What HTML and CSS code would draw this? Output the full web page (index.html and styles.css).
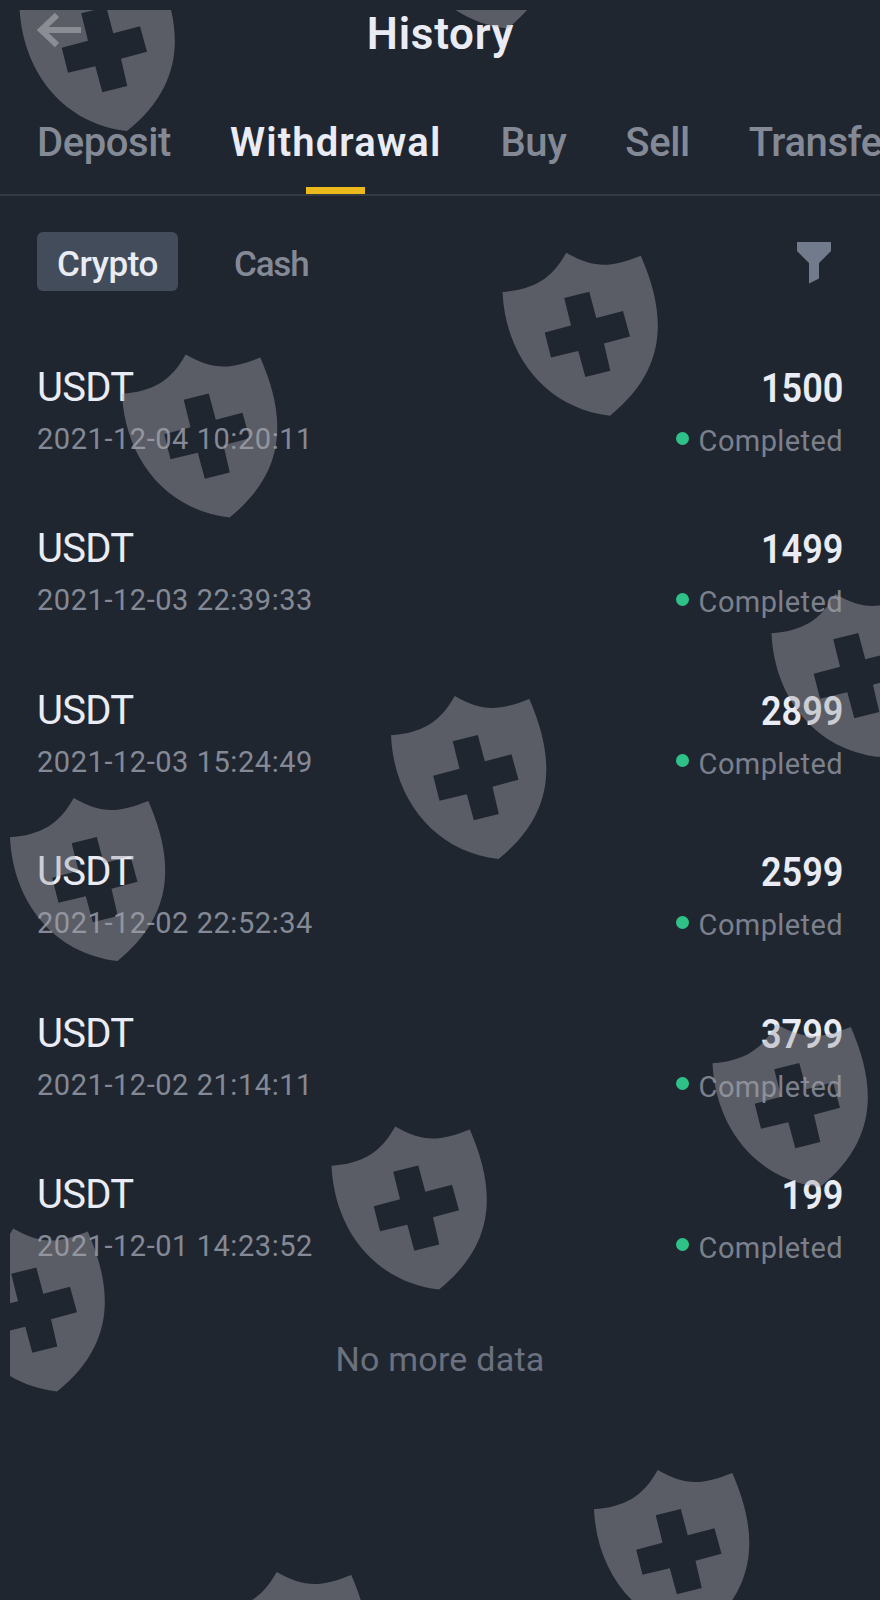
FILE: index.html
```html
<!DOCTYPE html>
<html lang="en">
<head>
    <meta charset="UTF-8">
    <meta name="viewport" content="width=device-width, initial-scale=1.0">
    <title>History</title>
    <link rel="stylesheet" href="styles.css">
</head>
<body>
    <header class="header">
        <svg class="back" viewBox="0 0 46 36" width="46" height="36">
            <path d="M44 18H4M20 3L4 18l16 15" fill="none" stroke="currentColor" stroke-width="6"/>
        </svg>
        <h1 class="title">History</h1>
    </header>

    <nav class="tabs">
        <a class="tab">Deposit</a>
        <a class="tab active">Withdrawal</a>
        <a class="tab">Buy</a>
        <a class="tab">Sell</a>
        <a class="tab">Transfer</a>
    </nav>

    <div class="filters">
        <button class="pill selected">Crypto</button>
        <button class="pill">Cash</button>
        <svg class="funnel" viewBox="0 0 34 42" width="34" height="42">
            <path d="M0 0h34v9L22 21v15.500l-10 5V21L0 9z" fill="currentColor"/>
        </svg>
    </div>

    <main class="list">
        <div class="row">
            <div><div class="coin">USDT</div><div class="date">2021-12-04 10:20:11</div></div>
            <div class="right"><div class="amount">1500</div><div class="status">Completed</div></div>
        </div>
        <div class="row">
            <div><div class="coin">USDT</div><div class="date">2021-12-03 22:39:33</div></div>
            <div class="right"><div class="amount">1499</div><div class="status">Completed</div></div>
        </div>
        <div class="row">
            <div><div class="coin">USDT</div><div class="date">2021-12-03 15:24:49</div></div>
            <div class="right"><div class="amount">2899</div><div class="status">Completed</div></div>
        </div>
        <div class="row">
            <div><div class="coin">USDT</div><div class="date">2021-12-02 22:52:34</div></div>
            <div class="right"><div class="amount">2599</div><div class="status">Completed</div></div>
        </div>
        <div class="row">
            <div><div class="coin">USDT</div><div class="date">2021-12-02 21:14:11</div></div>
            <div class="right"><div class="amount">3799</div><div class="status">Completed</div></div>
        </div>
        <div class="row">
            <div><div class="coin">USDT</div><div class="date">2021-12-01 14:23:52</div></div>
            <div class="right"><div class="amount">199</div><div class="status">Completed</div></div>
        </div>
    </main>
    <p class="end">No more data</p>

    <!-- shield watermark over the whole page -->
    <svg class="watermark" viewBox="10 10 870 1590" width="870" height="1590">
        <defs>
            <path id="shield" fill-rule="evenodd" d="M0 39.300C30 37 49 27 63.700 0C90 15 106 16 138.300 3C163 60 167 115 107.500 163C45 156 3 105 0 39.300z
                M61.700 45.300L68.500 72.700L42.200 79.700L48.500 104.700L75.800 98.300L82.800 124.300L107.800 118L101.500 90.700L127.500 83.700L120.500 58.300L93.800 65.300L86.800 39z"/>
        </defs>
        <use href="#shield" x="19.500" y="-32"/>
        <use href="#shield" x="400" y="-134.500"/>
        <use href="#shield" x="502.500" y="252.700"/>
        <use href="#shield" x="122" y="354.500"/>
        <use href="#shield" x="771.500" y="594"/>
        <use href="#shield" x="391" y="696"/>
        <use href="#shield" x="10" y="798"/>
        <use href="#shield" x="712.500" y="1024"/>
        <use href="#shield" x="331.500" y="1126.500"/>
        <use href="#shield" x="-50.500" y="1228.500"/>
        <use href="#shield" x="594" y="1470"/>
        <use href="#shield" x="213" y="1572"/>
    </svg>
</body>
</html>
```
FILE: styles.css
```css
:root {
    --background: #202630;
    --foreground: #eaecf5;
    --muted: #848996;
    --border: #333a44;
    --accent: #ecb91b;
    --green: #2fc288;
}

* {
    box-sizing: border-box;
}

body {
    position: relative;
    width: 880px;
    height: 1600px;
    margin: 0;
    overflow: hidden;
    background: var(--background);
    color: var(--foreground);
    font-family: Roboto, "Noto Sans", sans-serif;
}

.header {
    display: grid;
    grid-template-columns: 1fr auto 1fr;
    height: 69px;
    padding: 0 36px 0 37px;
}

.back {
    margin-top: 12px;
    color: #777b84;
}

.title {
    margin: 0;
    font-size: 44px;
    font-weight: 600;
    line-height: 69px;
    letter-spacing: 0.7px;
}

.tabs {
    display: flex;
    gap: 59px;
    height: 127px;
    padding: 53px 0 0 37px;
    border-bottom: 2px solid var(--border);
}

.tab {
    display: flex;
    flex-direction: column;
    justify-content: space-between;
    align-items: center;
    font-size: 40px;
    font-weight: 500;
    line-height: 41px;
    letter-spacing: -0.4px;
    color: var(--muted);
}

.tab.active {
    color: var(--foreground);
    font-weight: 600;
    letter-spacing: 1.1px;
}

.tab.active::after {
    content: "";
    width: 59px;
    height: 7px;
    background: var(--accent);
}

.filters {
    display: flex;
    align-items: flex-start;
    gap: 37px;
    padding: 36px 49px 0 37px;
}

.pill {
    height: 59px;
    padding: 5px 19px 0;
    border: none;
    border-radius: 6px;
    background: none;
    color: var(--muted);
    font-family: inherit;
    font-size: 35px;
    font-weight: 500;
    letter-spacing: -1.2px;
}

.pill.selected {
    width: 141px;
    background: #434c5a;
    color: var(--foreground);
    letter-spacing: -0.4px;
}

.funnel {
    margin: 10px 0 0 auto;
    color: #727b8c;
}

.list {
    padding: 73px 37px 0 37px;
}

.row {
    display: flex;
    justify-content: space-between;
    height: 161.4px;
}

.right {
    text-align: right;
}

.coin,
.amount {
    height: 58px;
    font-size: 40px;
    line-height: 48.5px;
    letter-spacing: -0.7px;
}

/* narrow figures, kept flush right */
.amount {
    font-size: 41px;
    font-weight: 600;
    letter-spacing: 0;
    transform: scaleX(0.88);
    transform-origin: right;
}

.date,
.status {
    color: var(--muted);
    font-size: 29px;
    line-height: 34px;
    letter-spacing: 0.55px;
}

.status {
    display: flex;
    align-items: center;
    gap: 10px;
    padding-top: 2px;
    color: #7b808c;
    letter-spacing: 0.4px;
}

.status::before {
    content: "";
    width: 13px;
    height: 13px;
    margin-bottom: 6px;
    border-radius: 50%;
    background: var(--green);
}

.end {
    margin: 7px 0 0;
    color: #6b717e;
    font-size: 34px;
    line-height: 40px;
    letter-spacing: 0.25px;
    text-align: center;
}

.watermark {
    position: absolute;
    top: 10px;
    left: 10px;
    fill: #a7a6ab;
    opacity: 0.43;
    pointer-events: none;
}
```
